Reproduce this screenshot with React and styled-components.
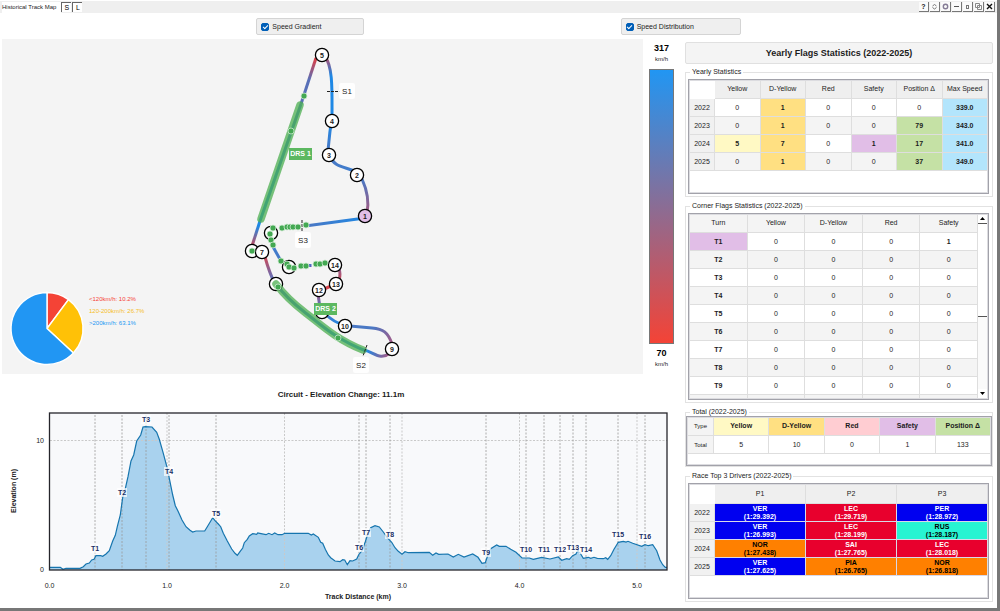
import React, { useState } from 'react';
import styled, { createGlobalStyle, ThemeProvider } from 'styled-components';

const theme = {
  text: '#1c1c1c',
  bar: '#efefef',
  panel: '#f4f4f4',
  line: '#dedede',
  frame: '#a2a2aa',
  yellow: '#fff9c4',
  doubleYellow: '#ffe082',
  red: '#ffcdd2',
  safety: '#e1bee7',
  position: '#c5e1a5',
  speed: '#b3e5fc',
};

const GlobalStyle = createGlobalStyle`
  * {
    box-sizing: border-box;
  }

  body {
    margin: 0;
    background: #fff;
    font-family: "Liberation Sans", Arial, sans-serif;
    font-size: 7px;
    line-height: 8px;
    color: ${theme.text};
  }

  svg {
    display: block;
  }
`;

const Window = styled.main`
  min-height: 100vh;
  padding-top: 1px;
  border-right: 3px solid #777;
  border-bottom: 3px solid #777;
  background: #fff;
`;

const TitleBar = styled.header`
  display: flex;
  align-items: center;
  height: 12px;
  padding: 0 2px;
  background: ${({ theme }) => theme.bar};

  h1 {
    margin: 0;
    padding-right: 5px;
    font-size: 6px;
    line-height: 11px;
    font-weight: normal;
    background: #fff;
  }
`;

const LetterButton = styled.button`
  width: 10px;
  height: 10px;
  margin-right: 1px;
  padding: 0;
  border: 0;
  border-top: 1px solid #666;
  border-left: 1px solid #666;
  background: #fff;
  font: 7px/7px "Liberation Sans", Arial, sans-serif;
`;

const WindowButtons = styled.div`
  display: flex;
  gap: 1px;
  margin-left: auto;
`;

const WindowButton = styled.button`
  display: grid;
  place-items: center;
  width: 10px;
  height: 10px;
  padding: 0;
  border: 0;
  border-right: 1px solid #777;
  border-bottom: 1px solid #777;
  background: #fafafa;
`;

const Toggles = styled.div`
  display: flex;
  justify-content: space-evenly;
  padding: 5px 0 4px;
`;

const Toggle = styled.label`
  display: flex;
  align-items: center;
  gap: 3px;
  width: ${({ $wide }) => ($wide ? '120px' : '108px')};
  height: 17px;
  padding: 0 4px;
  border: 1px solid #d4d4d4;
  border-radius: 2px;
  background: ${({ theme }) => theme.bar};

  input {
    display: grid;
    place-items: center;
    width: 8px;
    height: 8px;
    margin: 0;
    border: 1px solid #005fb8;
    border-radius: 2px;
    appearance: none;
    background: #fff;
  }

  input:checked {
    background: #005fb8;
  }

  input:checked::after {
    content: "";
    width: 4px;
    height: 2px;
    border-left: 1px solid #fff;
    border-bottom: 1px solid #fff;
    transform: rotate(-45deg);
  }
`;

const Content = styled.div`
  display: grid;
  grid-template-columns: minmax(0, 1fr) 308px;
  gap: 5px;
  padding: 0 4px 0 2px;
`;

const TrackRow = styled.div`
  display: flex;
`;

const TrackPanel = styled.div`
  flex: 1;
  background: ${({ theme }) => theme.panel};
`;

const SpeedScale = styled.div`
  display: flex;
  flex-direction: column;
  align-items: center;
  width: 37px;
  padding: 3px 0 4px;

  strong {
    font-size: 9px;
    line-height: 12px;
    color: #000;
  }

  span {
    font-size: 6px;
    line-height: 11px;
  }
`;

const SpeedBar = styled.div`
  flex: 1;
  width: 25px;
  margin: 4px 0 3px;
  border: 1px solid #777;
  background: linear-gradient(#2196f3, #f44336);
`;

const ChartTitle = styled.h2`
  margin: 15px 0 0;
  font-size: 8px;
  line-height: 12px;
  text-align: center;
`;

const SideColumn = styled.aside`
  display: flex;
  flex-direction: column;
  gap: 5px;
  padding-top: 3px;
`;

const SideTitle = styled.h2`
  margin: 0 0 -1px;
  border: 1px solid #e0e0e0;
  border-radius: 2px;
  background: ${({ theme }) => theme.panel};
  font-size: 9px;
  line-height: 20px;
  text-align: center;
`;

const Group = styled.fieldset`
  min-width: 0;
  margin: 0;
  padding: ${({ $tight }) => ($tight ? '0' : '3px 3px 2px 2px')};
  border: 1px solid #e2e2e2;

  legend {
    margin-left: ${({ $tight }) => ($tight ? '4px' : '2px')};
    padding: 0 2px;
  }
`;

const Frame = styled.div`
  display: flex;
  height: ${({ $height }) => $height}px;
  overflow: hidden;
  border: 1px solid ${({ theme }) => theme.frame};
  outline: 1px solid #dcdce0;
  outline-offset: -2px;
  padding-left: 1px;
`;

const Table = styled.table`
  flex: 1;
  align-self: flex-start;
  width: 100%;
  border-collapse: separate;
  border-spacing: 0;
  table-layout: fixed;
  text-align: center;

  th,
  td {
    height: 18px;
    padding: 0;
    border-right: 1px solid ${({ theme }) => theme.line};
    border-bottom: 1px solid ${({ theme }) => theme.line};
    font-weight: normal;
  }

  thead th {
    height: ${({ $headHeight }) => $headHeight || 19}px;
    background: ${({ $headBg }) => $headBg || '#efefef'};
  }

  thead td {
    border-color: transparent;
  }

  tbody th[scope="row"] {
    background: #f1f1f1;
  }

  tbody tr:nth-child(even) {
    background: ${({ $striped, theme }) => ($striped ? theme.panel : '#fff')};
  }
`;

const Cell = styled.td`
  && {
    background: ${({ $bg }) => $bg};
    font-weight: ${({ $bold }) => ($bold ? 'bold' : 'normal')};
  }
`;

const TypeHead = styled.th`
  &&& {
    background: ${({ $bg }) => $bg};
    font-weight: ${({ $small }) => ($small ? 'normal' : 'bold')};
    font-size: ${({ $small }) => ($small ? '6px' : '7px')};
  }
`;

const DriverCell = styled.td`
  && {
    background: ${({ $bg }) => $bg};
    border-color: #d8d8e8;
    color: ${({ $dark }) => ($dark ? '#000' : '#fff')};
    font-weight: bold;
  }
`;

const ScrollBar = styled.div`
  display: flex;
  flex-direction: column;
  flex: 0 0 10px;
  background: #fafafa;
`;

const ScrollButton = styled.button`
  display: grid;
  place-items: center;
  height: 10px;
  padding: 0;
  border: 0;
  border-right: 1px solid #555;
  border-bottom: 1px solid #555;
  background: #fff;
`;

const ScrollThumb = styled.div`
  height: 93px;
  margin-bottom: auto;
  border-right: 1px solid #555;
  border-bottom: 1px solid #555;
  background: #fff;
`;

const ChartText = styled.text`
  font-size: ${({ $size }) => $size || 7}px;
  font-weight: ${({ $bold }) => ($bold ? 'bold' : 'normal')};
  fill: ${({ $color }) => $color || '#222'};
  text-anchor: ${({ $anchor }) => $anchor || 'middle'};
`;

const windowIcons = [
  ['Help', <ChartText key="t" x="4.5" y="7" $bold>?</ChartText>],
  ['Refresh', <path key="p" d="M2.5 4 L4.5 2.5 L6.5 4 M2.5 5.5 L4.5 7 L6.5 5.5" stroke="#777" />],
  ['Settings', <circle key="c" cx="4.5" cy="4.5" r="2.2" stroke="#857c96" strokeWidth="1.4" />],
  ['Minimize', <path key="p" d="M2 4.5 H7" stroke="#555" />],
  ['Restore', <rect key="r" x="3.5" y="3.5" width="2" height="3" stroke="#777" />],
  ['Cascade', <path key="p" d="M1.5 1.5 H5.5 V5.5 H1.5 Z M3.5 3.5 H7.5 V7.5 H3.5 Z" stroke="#888" />],
  ['Close', <path key="p" d="M2 2 L7 7 M7 2 L2 7" stroke="#111" strokeWidth="1.4" />],
];

// Track pieces, coloured from their start speed to their end speed.
const FAST = '#1e88e5';
const MID = '#4a78c4';
const SLOW = '#c74b5c';
const segments = [
  { d: 'M365 218 L309 225.5', from: [365, 218, FAST], to: [309, 226, MID] },
  { d: 'M362 179 C367 190 369 203 367 213', from: [362, 180, MID], to: [367, 213, '#a55a80'] },
  { d: 'M329 155 C335 168 343 166 357 172', from: [329, 155, MID], to: [357, 172, '#3d7fd0'] },
  { d: 'M331 124 C329 137 329 143 328 150', from: [331, 124, FAST], to: [328, 150, MID] },
  { d: 'M325 57 C333 66 332 92 332 115', from: [326, 58, '#b05070'], to: [331, 76, FAST] },
  { d: 'M316 58 L301 104', from: [316, 58, '#e03b40'], to: [309, 80, '#5870b8'] },
  { d: 'M301 104 L260 221', from: [301, 104, MID], to: [260, 221, FAST] },
  { d: 'M260 221 L252 246', from: [258, 226, FAST], to: [252, 246, '#c74b5c'] },
  { d: 'M265 257 C268 268 270 274 275 284', from: [265, 258, SLOW], to: [272, 278, '#6470b8'] },
  { d: 'M276 284 C288 300 298 307 307 314 C320 324 337 340 366 351', from: [276, 284, MID], to: [366, 351, FAST] },
  { d: 'M364 350 C374 352 380 361 390 353', from: [366, 351, FAST], to: [388, 355, '#a05a88'] },
  { d: 'M392 344 C388 332 383 329 372 328 L350 326', from: [391, 343, '#a05a88'], to: [372, 328, MID] },
  { d: 'M342 324 Q335 323 324 313', from: [342, 324, FAST], to: [324, 313, MID] },
  { d: 'M320 308 L318 294', from: [320, 308, MID], to: [318, 294, '#a05a88'] },
  { d: 'M324 289 L331 286', from: [324, 289, SLOW], to: [331, 286, '#e03b40'] },
  { d: 'M339 280 Q341 274 339 269', from: [339, 280, '#c74b5c'], to: [339, 269, '#96608e'] },
  { d: 'M310 264 V267', from: [310, 264, MID], to: [310, 267, '#5a50c0'] },
  { d: 'M281 261 L272 245', from: [281, 261, MID], to: [272, 245, '#3d7fd0'] },
];

const corners = [
  [5, 322, 55], [4, 332, 121], [3, 329, 155], [2, 357, 175], [1, 365, 216],
  [6, 252, 251], [7, 262, 252], [8, 276, 284], [9, 392, 349], [10, 345, 326],
  [11, 322, 312], [12, 319, 290], [13, 336, 284], [14, 335, 265], [15, 289, 267], [16, 271, 233],
];
const hiddenNumbers = [6, 8, 11, 15, 16];

const overtakes = [
  [304, 96], [291, 131], [278, 287], [338, 338], [252, 251], [273, 228], [270, 234],
  [271, 240], [273, 245], [281, 261], [287, 264], [289, 267], [294, 268], [301, 266], [306, 266],
  [316, 264], [320, 264], [325, 263], [282, 228], [287, 227], [290, 227], [293, 227],
  [298, 227], [306, 225],
];

function TrackMap() {
  return (
    <svg viewBox="2 39 641 335" width="100%" role="img" aria-label="Track map">
      <defs>
        {segments.map(({ from, to }, i) => (
          <linearGradient
            key={i}
            id={`speed-${i}`}
            gradientUnits="userSpaceOnUse"
            x1={from[0]}
            y1={from[1]}
            x2={to[0]}
            y2={to[1]}
          >
            <stop offset="0" stopColor={from[2]} />
            <stop offset="1" stopColor={to[2]} />
          </linearGradient>
        ))}
      </defs>
      {segments.map(({ d }, i) => (
        <path key={i} d={d} fill="none" stroke={`url(#speed-${i})`} strokeWidth="3" />
      ))}
      <path d="M302 220 V232 M327 91.5 H340" stroke="#222" strokeDasharray="3 1" fill="none" />

      {corners.map(([n, x, y]) => (
        <g key={n}>
          <circle cx={x} cy={y} r="6.6" fill={n === 1 ? theme.safety : '#fff'} stroke="#000" strokeWidth="1.3" />
          {!hiddenNumbers.includes(n) && (
            <ChartText x={x} y={y + 2.5} $bold>{n}</ChartText>
          )}
        </g>
      ))}

      <g fill="none" stroke="#4caf50" strokeWidth="7.5" strokeLinecap="round" opacity="0.75">
        <path d="M300 105 L261 219" />
        <path d="M276 284 C288 300 298 307 307 314 C320 324 337 340 363 350" />
      </g>
      <g fill="#43a852" stroke="#cdeacf" strokeWidth="0.8">
        {overtakes.map(([x, y]) => (
          <circle key={`${x}-${y}`} cx={x} cy={y} r="3" />
        ))}
      </g>
      <path d="M367 345 L363 356" stroke="#222" strokeDasharray="3 1" />

      <rect x="289" y="148" width="23" height="12" fill="#5cb860" />
      <ChartText x="300.5" y="156" $bold $color="#fff">DRS 1</ChartText>
      <rect x="314" y="303" width="23" height="12" fill="#5cb860" />
      <ChartText x="325.5" y="311" $bold $color="#fff">DRS 2</ChartText>

      {[['S1', 347, 91], ['S3', 303, 240], ['S2', 361, 365]].map(([label, x, y]) => (
        <g key={label}>
          <rect x={x - 8} y={y - 8} width="16" height="16" rx="2" fill="#fff" opacity="0.85" />
          <ChartText x={x} y={y + 3} $size={8}>{label}</ChartText>
        </g>
      ))}

      <g stroke="#fff" strokeWidth="1.4">
        <path d="M47 328.500 V292.500 A36 36 0 0 1 68.500 299.600 Z" fill="#f44336" />
        <path d="M47 328.500 L68.500 299.600 A36 36 0 0 1 73.400 353 Z" fill="#ffc107" />
        <path d="M47 328.500 L73.400 353 A36 36 0 1 1 47 292.500 Z" fill="#2196f3" />
      </g>
      <ChartText x="89" y="301" $size={6} $anchor="start" $color="#f44336">&lt;120km/h: 10.2%</ChartText>
      <ChartText x="89" y="313" $size={6} $anchor="start" $color="#f5bd1f">120-200km/h: 26.7%</ChartText>
      <ChartText x="89" y="325" $size={6} $anchor="start" $color="#2196f3">&gt;200km/h: 63.1%</ChartText>
    </svg>
  );
}

// Elevation samples on a grid three times finer than the chart.
const profile = [
  [148, 562], [181, 562], [189, 568], [198, 565], [240, 565], [250, 560], [258, 552], [268, 549],
  [275, 540], [282, 538], [288, 527], [302, 527], [308, 529], [318, 522], [328, 512], [338, 483],
  [346, 466], [352, 440], [361, 405], [368, 352], [375, 330], [384, 290], [393, 243], [401, 225],
  [410, 183], [422, 165], [429, 141], [436, 140], [456, 141], [470, 157], [478, 178], [490, 220],
  [502, 265], [508, 295], [518, 345], [526, 377], [535, 395], [546, 420], [558, 440], [570, 451],
  [578, 456], [588, 453], [614, 453], [622, 440], [630, 427], [638, 413], [645, 422], [655, 432],
  [662, 440], [670, 460], [682, 483], [695, 507], [705, 520], [712, 526], [720, 515], [728, 504],
  [733, 488], [742, 478], [748, 468], [758, 461], [770, 463], [773, 459], [783, 461], [798, 464],
  [806, 460], [816, 464], [824, 459], [834, 464], [846, 464], [854, 460], [925, 460], [934, 465],
  [940, 462], [955, 472], [962, 487], [968, 490], [976, 508], [985, 525], [992, 533], [1005, 543],
  [1020, 545], [1028, 539], [1034, 540], [1042, 554], [1050, 542], [1058, 543], [1070, 537],
  [1076, 524], [1086, 512], [1096, 485], [1104, 460], [1112, 443], [1125, 437], [1138, 441],
  [1150, 456], [1162, 473], [1175, 487], [1185, 503], [1195, 514], [1206, 523], [1215, 515],
  [1225, 518], [1288, 517], [1298, 526], [1308, 519], [1316, 523], [1344, 522], [1360, 531],
  [1375, 523], [1392, 531], [1418, 522], [1434, 532], [1446, 550], [1456, 548], [1462, 530],
  [1472, 506], [1490, 495], [1498, 499], [1518, 499], [1532, 508], [1548, 517], [1566, 534],
  [1588, 534], [1600, 538], [1625, 532], [1650, 537], [1675, 531], [1685, 541], [1700, 536],
  [1708, 538], [1718, 527], [1728, 522], [1734, 510], [1742, 522], [1750, 535], [1765, 532],
  [1772, 535], [1782, 532], [1792, 535], [1810, 536], [1817, 533], [1823, 538], [1832, 527],
  [1842, 508], [1855, 487], [1870, 484], [1878, 486], [1884, 484], [1898, 490], [1925, 499],
  [1935, 494], [1945, 497], [1958, 494], [1970, 512], [1980, 540], [1988, 554], [1996, 562],
  [2001, 562],
].map(([x, y]) => `${(x / 3).toFixed(1)},${(380 + y / 3).toFixed(1)}`);

const turns = [
  [95, 548], [122, 492], [146, 419], [169, 471], [216, 513], [359, 547], [366, 532], [390, 534],
  [486, 552], [526, 549], [544, 549], [560, 549], [573, 547], [586, 549], [618, 534], [645, 536],
];

function ElevationChart() {
  return (
    <svg viewBox="2 401 678 202" width="100%" role="img" aria-label="Elevation profile">
      <rect x="50" y="413" width="617" height="157" fill="#f8f9fb" />
      <polygon points={`49.5,570 ${profile.join(' ')} 667,570`} fill="#a9d2ee" />
      <g stroke="#c9c9c9" strokeDasharray="2 1.500">
        <path d="M50 440.500 H667" />
        {[167, 284.5, 402, 519.5, 637].map((x) => (
          <path key={x} d={`M${x} 413 V570`} />
        ))}
      </g>
      <g stroke="#999" strokeDasharray="2 1.500">
        {turns.map(([x]) => (
          <path key={x} d={`M${x} 415 V570`} strokeWidth="0.8" />
        ))}
      </g>
      <polyline points={profile.join(' ')} fill="none" stroke="#1675ae" strokeWidth="1.200" />
      <rect x="49.5" y="413" width="617.5" height="157" fill="none" stroke="#25252b" strokeWidth="1.300" />
      {turns.map(([x, y], i) => {
        const half = i > 8 ? 7 : 5;
        return (
          <g key={x}>
            <rect x={x - half} y={y - 4} width={half * 2} height="9" fill="#fff" opacity="0.7" />
            <ChartText x={x} y={y + 3} $bold $color="#1a2f66">{`T${i + 1}`}</ChartText>
          </g>
        );
      })}
      <ChartText x="44" y="443" $anchor="end">10</ChartText>
      <ChartText x="44" y="572" $anchor="end">0</ChartText>
      {['0.0', '1.0', '2.0', '3.0', '4.0', '5.0'].map((km, i) => (
        <ChartText key={km} x={49.5 + i * 117.5} y="588">{km}</ChartText>
      ))}
      <ChartText x="358" y="599" $bold>Track Distance (km)</ChartText>
      <ChartText x="16" y="491" $bold transform="rotate(-90 16 491)">Elevation (m)</ChartText>
    </svg>
  );
}

const yearly = [
  ['2022', 0, 1, 0, 0, 0, '339.0'],
  ['2023', 0, 1, 0, 0, 79, '343.0'],
  ['2024', 5, 7, 0, 1, 17, '341.0'],
  ['2025', 0, 1, 0, 0, 37, '349.0'],
];
const flagColors = [theme.yellow, theme.doubleYellow, theme.red, theme.safety, theme.position, theme.speed];

const teams = { VER: '#0000f0', PER: '#0000f0', LEC: '#e8002d', SAI: '#e8002d', NOR: '#ff8000', PIA: '#ff8000', RUS: '#27f4d2' };
const podiums = [
  ['2022', ['VER', '1:29.392'], ['LEC', '1:29.719'], ['PER', '1:28.972']],
  ['2023', ['VER', '1:26.993'], ['LEC', '1:28.199'], ['RUS', '1:28.187']],
  ['2024', ['NOR', '1:27.438'], ['SAI', '1:27.765'], ['LEC', '1:28.018']],
  ['2025', ['VER', '1:27.625'], ['PIA', '1:26.765'], ['NOR', '1:26.818']],
];
const cornerRows = ['T1', 'T2', 'T3', 'T4', 'T5', 'T6', 'T7', 'T8', 'T9'];

function YearlyTable() {
  return (
    <Table $striped>
      <colgroup>
        <col width="25" />
      </colgroup>
      <thead>
        <tr>
          <td />
          {['Yellow', 'D-Yellow', 'Red', 'Safety', 'Position Δ', 'Max Speed'].map((h) => (
            <th key={h} scope="col">{h}</th>
          ))}
        </tr>
      </thead>
      <tbody>
        {yearly.map(([year, ...values]) => (
          <tr key={year}>
            <th scope="row">{year}</th>
            {values.map((value, i) => (value === 0
              ? <td key={i}>0</td>
              : <Cell key={i} $bg={flagColors[i]} $bold>{value}</Cell>
            ))}
          </tr>
        ))}
      </tbody>
    </Table>
  );
}

function CornerTable() {
  return (
    <Table $striped $headBg={theme.panel}>
      <thead>
        <tr>
          {['Turn', 'Yellow', 'D-Yellow', 'Red', 'Safety'].map((h) => (
            <th key={h} scope="col">{h}</th>
          ))}
        </tr>
      </thead>
      <tbody>
        {cornerRows.map((turn, i) => (
          <tr key={turn}>
            <Cell $bg={i === 0 ? theme.safety : undefined} $bold>{turn}</Cell>
            <td>0</td>
            <td>0</td>
            <td>0</td>
            {i === 0 ? <Cell $bold>1</Cell> : <td>0</td>}
          </tr>
        ))}
        <tr>
          <td /><td /><td /><td /><td />
        </tr>
      </tbody>
    </Table>
  );
}

function TotalTable() {
  return (
    <Table>
      <colgroup>
        <col width="26" />
      </colgroup>
      <thead>
        <tr>
          <TypeHead scope="col" $small $bg={theme.panel}>Type</TypeHead>
          {['Yellow', 'D-Yellow', 'Red', 'Safety', 'Position Δ'].map((h, i) => (
            <TypeHead key={h} scope="col" $bg={flagColors[i]}>{h}</TypeHead>
          ))}
        </tr>
      </thead>
      <tbody>
        <tr>
          <TypeHead scope="row" $small $bg={theme.panel}>Total</TypeHead>
          {[5, 10, 0, 1, 133].map((n) => (
            <td key={n}>{n}</td>
          ))}
        </tr>
      </tbody>
    </Table>
  );
}

function DriversTable() {
  return (
    <Table $headHeight={20}>
      <colgroup>
        <col width="25" />
      </colgroup>
      <thead>
        <tr>
          <td />
          <th scope="col">P1</th>
          <th scope="col">P2</th>
          <th scope="col">P3</th>
        </tr>
      </thead>
      <tbody>
        {podiums.map(([year, ...drivers]) => (
          <tr key={year}>
            <th scope="row">{year}</th>
            {drivers.map(([name, time]) => (
              <DriverCell key={name} $bg={teams[name]} $dark={['NOR', 'PIA', 'RUS'].includes(name)}>
                {name}
                <br />
                {`(${time})`}
              </DriverCell>
            ))}
          </tr>
        ))}
      </tbody>
    </Table>
  );
}

const App = () => {
  const [gradient, setGradient] = useState(true);
  const [distribution, setDistribution] = useState(true);

  return (
    <ThemeProvider theme={theme}>
      <GlobalStyle />
      <Window>
        <TitleBar>
          <h1>Historical Track Map</h1>
          <LetterButton>S</LetterButton>
          <LetterButton>L</LetterButton>
          <WindowButtons>
            {windowIcons.map(([label, icon]) => (
              <WindowButton key={label} aria-label={label}>
                <svg width="9" height="9" fill="none">{icon}</svg>
              </WindowButton>
            ))}
          </WindowButtons>
        </TitleBar>

        <Toggles>
          <Toggle>
            <input type="checkbox" checked={gradient} onChange={(e) => setGradient(e.target.checked)} />
            Speed Gradient
          </Toggle>
          <Toggle $wide>
            <input type="checkbox" checked={distribution} onChange={(e) => setDistribution(e.target.checked)} />
            Speed Distribution
          </Toggle>
        </Toggles>

        <Content>
          <section>
            <TrackRow>
              <TrackPanel>
                <TrackMap />
              </TrackPanel>
              <SpeedScale>
                <strong>317</strong>
                <span>km/h</span>
                <SpeedBar />
                <strong>70</strong>
                <span>km/h</span>
              </SpeedScale>
            </TrackRow>
            <ChartTitle>Circuit - Elevation Change: 11.1m</ChartTitle>
            <ElevationChart />
          </section>

          <SideColumn>
            <SideTitle>Yearly Flags Statistics (2022-2025)</SideTitle>
            <Group>
              <legend>Yearly Statistics</legend>
              <Frame $height={115}>
                <YearlyTable />
              </Frame>
            </Group>
            <Group>
              <legend>Corner Flags Statistics (2022-2025)</legend>
              <Frame $height={187}>
                <CornerTable />
                <ScrollBar>
                  <ScrollButton aria-label="Scroll up">
                    <svg width="5" height="3"><path d="M0 3 L2.500 0 L5 3 Z" /></svg>
                  </ScrollButton>
                  <ScrollThumb />
                  <ScrollButton aria-label="Scroll down">
                    <svg width="5" height="3"><path d="M0 0 L2.500 3 L5 0 Z" /></svg>
                  </ScrollButton>
                </ScrollBar>
              </Frame>
            </Group>
            <Group $tight>
              <legend>Total (2022-2025)</legend>
              <Frame $height={50}>
                <TotalTable />
              </Frame>
            </Group>
            <Group>
              <legend>Race Top 3 Drivers (2022-2025)</legend>
              <Frame $height={116}>
                <DriversTable />
              </Frame>
            </Group>
          </SideColumn>
        </Content>
      </Window>
    </ThemeProvider>
  );
};

export default App;
